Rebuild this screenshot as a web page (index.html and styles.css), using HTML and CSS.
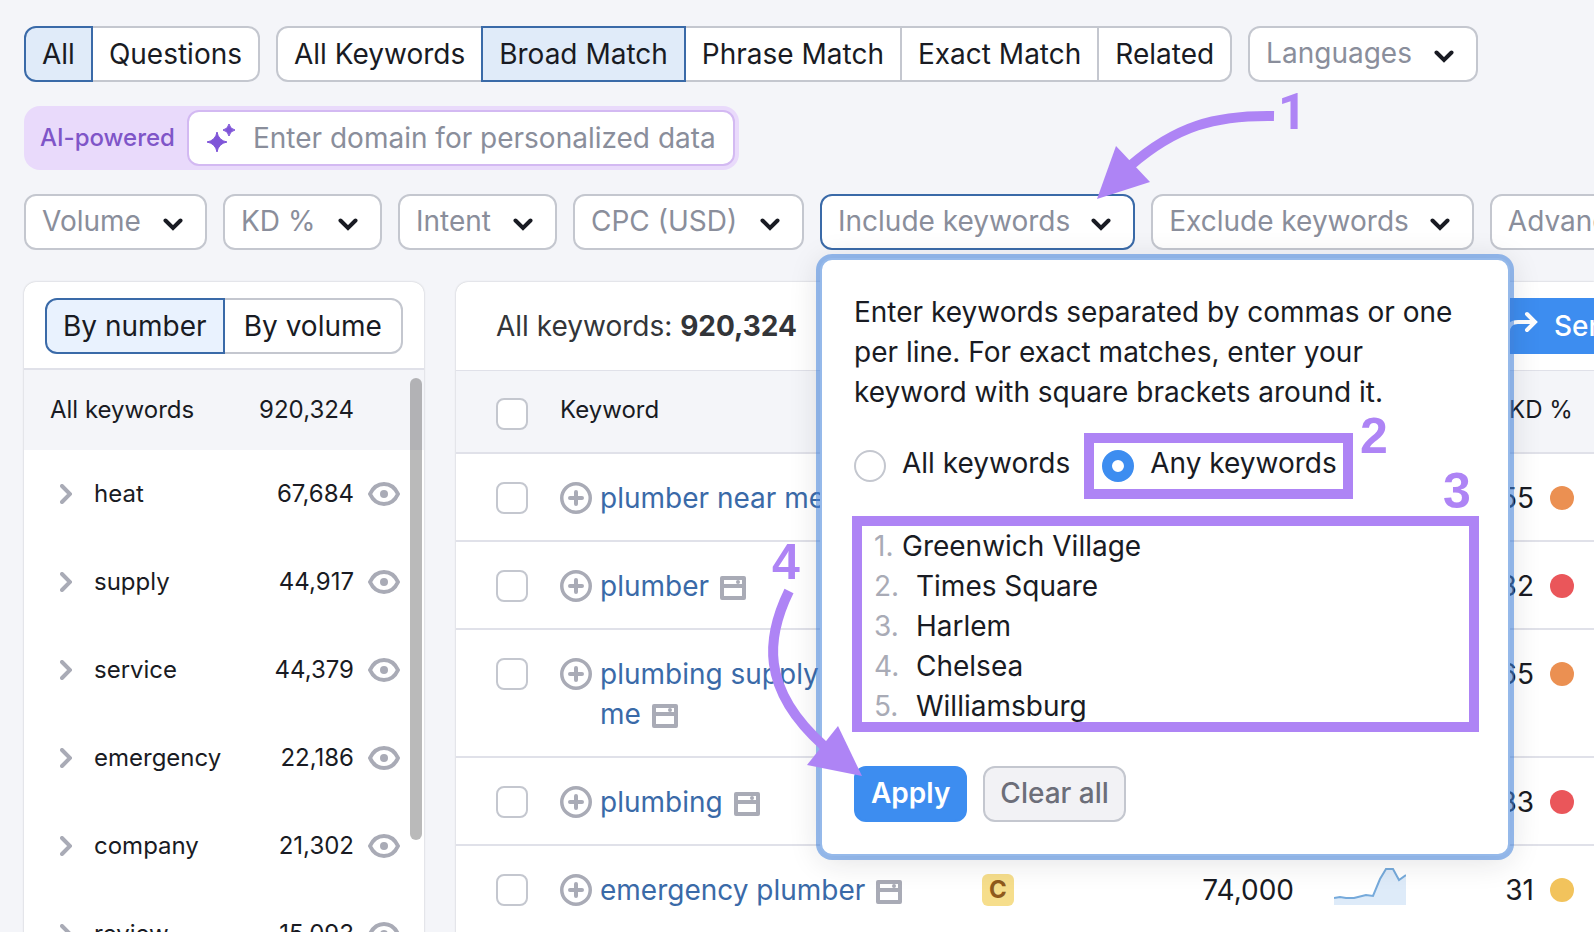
FILE: index.html
```html
<!DOCTYPE html>
<html lang="en">

<head>
    <meta charset="utf-8">
    <title>Keyword Magic Tool</title>
    <link rel="stylesheet" href="styles.css">
</head>

<body>
    <!-- shared icons -->
    <svg class="sprite" aria-hidden="true">
        <symbol id="chevron-down" viewBox="0 0 20 13">
            <path d="M2.5 2.5 L10 10 L17.5 2.5" fill="none" stroke="currentColor" stroke-width="4" stroke-linecap="round" stroke-linejoin="miter" />
        </symbol>
        <symbol id="chevron-right" viewBox="0 0 12 20">
            <path d="M2 2 L10 10 L2 18" fill="none" stroke="currentColor" stroke-width="4" stroke-linecap="round" />
        </symbol>
        <symbol id="eye" viewBox="0 0 32 24">
            <path d="M2 12 C5 5.500 10 2 16 2 S27 5.500 30 12 C27 18.500 22 22 16 22 S5 18.500 2 12 Z" fill="none" stroke="currentColor" stroke-width="4" stroke-linejoin="round" />
            <circle cx="16" cy="12" r="4" fill="currentColor" />
        </symbol>
        <symbol id="plus" viewBox="0 0 32 32">
            <circle cx="16" cy="16" r="14.250" fill="none" stroke="currentColor" stroke-width="3.500" />
            <path d="M16 10 V22 M10 16 H22" stroke="currentColor" stroke-width="4" stroke-linecap="round" />
        </symbol>
        <symbol id="serp" viewBox="0 0 26 24">
            <path fill="currentColor" fill-rule="evenodd" d="M2 0 H24 Q26 0 26 2 V22 Q26 24 24 24 H2 Q0 24 0 22 V2 Q0 0 2 0 Z M4 4 V8 H22 V4 Z M4 12 V20 H22 V12 Z" />
            <circle cx="18" cy="6" r="2" fill="currentColor" />
        </symbol>
    </svg>

    <div class="toolbar">
        <div class="segment">
            <button type="button" class="active">All</button>
            <button type="button">Questions</button>
        </div>
        <div class="segment">
            <button type="button">All Keywords</button>
            <button type="button" class="active">Broad Match</button>
            <button type="button">Phrase Match</button>
            <button type="button">Exact Match</button>
            <button type="button">Related</button>
        </div>
        <div class="select">
            <select aria-label="Languages"><option>Languages</option></select>
            <svg class="chevron"><use href="#chevron-down" /></svg>
        </div>
    </div>

    <div class="ai-bar">
        <label for="domain">AI-powered</label>
        <div class="ai-field">
            <svg class="sparkle" viewBox="0 0 28 28">
                <path d="M10 8 Q11.500 16.500 20 18 Q11.500 19.500 10 28 Q8.500 19.500 0 18 Q8.500 16.500 10 8 Z M22 0 Q23 5 28 6 Q23 7 22 12 Q21 7 16 6 Q21 5 22 0 Z" fill="#7f55d8" stroke="#7f55d8" stroke-linejoin="round" />
            </svg>
            <input type="text" id="domain" name="domain" placeholder="Enter domain for personalized data">
        </div>
    </div>

    <div class="toolbar filters">
        <div class="select">
            <select aria-label="Volume"><option>Volume</option></select>
            <svg class="chevron"><use href="#chevron-down" /></svg>
        </div>
        <div class="select">
            <select aria-label="KD %"><option>KD %</option></select>
            <svg class="chevron"><use href="#chevron-down" /></svg>
        </div>
        <div class="select">
            <select aria-label="Intent"><option>Intent</option></select>
            <svg class="chevron"><use href="#chevron-down" /></svg>
        </div>
        <div class="select">
            <select aria-label="CPC (USD)"><option>CPC (USD)</option></select>
            <svg class="chevron"><use href="#chevron-down" /></svg>
        </div>
        <div class="select">
            <button type="button" class="open" aria-expanded="true">Include keywords</button>
            <svg class="chevron"><use href="#chevron-down" /></svg>

            <form class="popup">
                <p>Enter keywords separated by commas or one per line. For exact matches, enter your keyword with square brackets around it.</p>
                <div class="radios">
                    <label><input type="radio" name="match">All keywords</label>
                    <label class="marked"><input type="radio" name="match" checked>Any keywords</label>
                </div>
                <div class="editor">
                    <ol class="gutter" aria-hidden="true">
                        <li>1.</li>
                        <li>2.</li>
                        <li>3.</li>
                        <li>4.</li>
                        <li>5.</li>
                    </ol>
                    <textarea rows="5" aria-label="Keywords" spellcheck="false">Greenwich Village
&ensp;Times Square
&ensp;Harlem
&ensp;Chelsea
&ensp;Williamsburg</textarea>
                </div>
                <div class="actions">
                    <button type="button" class="btn primary">Apply</button>
                    <button type="button" class="btn">Clear all</button>
                </div>
            </form>
        </div>
        <div class="select">
            <button type="button" aria-expanded="false">Exclude keywords</button>
            <svg class="chevron"><use href="#chevron-down" /></svg>
        </div>
        <div class="select">
            <button type="button" aria-expanded="false">Advanced filters</button>
            <svg class="chevron"><use href="#chevron-down" /></svg>
        </div>
    </div>

    <div class="content">
        <aside class="card groups">
            <div class="groups-head">
                <div class="segment">
                    <button type="button" class="active">By number</button>
                    <button type="button">By volume</button>
                </div>
            </div>
            <div class="groups-total"><span>All keywords</span><span>920,324</span></div>
            <ul class="group-list">
                <li><svg class="arrow"><use href="#chevron-right" /></svg><span>heat</span><span class="count">67,684</span><svg class="eye"><use href="#eye" /></svg></li>
                <li><svg class="arrow"><use href="#chevron-right" /></svg><span>supply</span><span class="count">44,917</span><svg class="eye"><use href="#eye" /></svg></li>
                <li><svg class="arrow"><use href="#chevron-right" /></svg><span>service</span><span class="count">44,379</span><svg class="eye"><use href="#eye" /></svg></li>
                <li><svg class="arrow"><use href="#chevron-right" /></svg><span>emergency</span><span class="count">22,186</span><svg class="eye"><use href="#eye" /></svg></li>
                <li><svg class="arrow"><use href="#chevron-right" /></svg><span>company</span><span class="count">21,302</span><svg class="eye"><use href="#eye" /></svg></li>
                <li><svg class="arrow"><use href="#chevron-right" /></svg><span>review</span><span class="count">15,093</span><svg class="eye"><use href="#eye" /></svg></li>
            </ul>
            <div class="scrollbar"></div>
        </aside>

        <main class="card results">
            <div class="results-head">
                <div>All keywords: <b>920,324</b></div>
                <button type="button" class="send">
                    <svg viewBox="0 0 32 32">
                        <path d="M2 28 V22 Q2 12 12 12 H28 M21 4 L29 12 L21 20" fill="none" stroke="currentColor" stroke-width="4" stroke-linecap="round" />
                    </svg>
                    Send keywords
                </button>
            </div>
            <table>
                <colgroup>
                    <col class="c-check">
                    <col class="c-keyword">
                    <col class="c-intent">
                    <col class="c-volume">
                    <col class="c-trend">
                    <col class="c-kd">
                </colgroup>
                <thead>
                    <tr>
                        <th><input type="checkbox" aria-label="Select all"></th>
                        <th>Keyword</th>
                        <th></th>
                        <th></th>
                        <th></th>
                        <th class="kd-head">KD %</th>
                    </tr>
                </thead>
                <tbody>
                    <tr>
                        <td><input type="checkbox" aria-label="plumber near me"></td>
                        <td><div class="kw"><svg class="plus"><use href="#plus" /></svg><div><a href="#">plumber near me</a></div></div></td>
                        <td></td>
                        <td></td>
                        <td></td>
                        <td><div class="kd">55<i class="dot orange"></i></div></td>
                    </tr>
                    <tr>
                        <td><input type="checkbox" aria-label="plumber"></td>
                        <td><div class="kw"><svg class="plus"><use href="#plus" /></svg><div><a href="#">plumber</a><svg class="serp"><use href="#serp" /></svg></div></div></td>
                        <td></td>
                        <td></td>
                        <td></td>
                        <td><div class="kd">82<i class="dot red"></i></div></td>
                    </tr>
                    <tr>
                        <td><input type="checkbox" aria-label="plumbing supply near me"></td>
                        <td><div class="kw"><svg class="plus"><use href="#plus" /></svg><div><a href="#">plumbing supply near me</a><svg class="serp"><use href="#serp" /></svg></div></div></td>
                        <td></td>
                        <td></td>
                        <td></td>
                        <td><div class="kd">65<i class="dot orange"></i></div></td>
                    </tr>
                    <tr>
                        <td><input type="checkbox" aria-label="plumbing"></td>
                        <td><div class="kw"><svg class="plus"><use href="#plus" /></svg><div><a href="#">plumbing</a><svg class="serp"><use href="#serp" /></svg></div></div></td>
                        <td></td>
                        <td></td>
                        <td></td>
                        <td><div class="kd">83<i class="dot red"></i></div></td>
                    </tr>
                    <tr>
                        <td><input type="checkbox" aria-label="emergency plumber"></td>
                        <td><div class="kw"><svg class="plus"><use href="#plus" /></svg><div><a href="#">emergency plumber</a><svg class="serp"><use href="#serp" /></svg></div></div></td>
                        <td><span class="intent">C</span></td>
                        <td class="num">74,000</td>
                        <td>
                            <svg class="trend" viewBox="0 0 72 38">
                                <path d="M0 31 L6 30 L12 31 H20 L32 28 L39 29 L46 12 L52 2 H59 L65 13 L72 8 V38 H0 Z" fill="#deebf9" />
                                <path d="M0 31 L6 30 L12 31 H20 L32 28 L39 29 L46 12 L52 2 H59 L65 13 L72 8" fill="none" stroke="#76aadb" stroke-width="2" />
                            </svg>
                        </td>
                        <td><div class="kd">31<i class="dot yellow"></i></div></td>
                    </tr>
                </tbody>
            </table>
        </main>
    </div>

    <!-- walkthrough steps, drawn above the page -->
    <div class="steps">
        <svg class="step-arrows" width="1594" height="932">
            <path d="M1274 116 C1215 115 1176 126 1130 166" />
            <polygon points="1097,199 1116,146 1150,182" />
            <path d="M789 591 C767 636 759 688 824 746" />
            <polygon points="862,776 838,726 807,765" />
        </svg>
        <span class="step one">1</span>
        <span class="step two">2</span>
        <span class="step three">3</span>
        <span class="step four">4</span>
    </div>
</body>

</html>
```
FILE: styles.css
```css
* {
    box-sizing: border-box;
}

body {
    font-family: Inter, "Liberation Sans", sans-serif;
    font-size: 28px;
    line-height: 40px;
    color: #191b23;
    background-color: #f4f5f9;
    margin: 0;
    padding: 26px 0 0 24px;
    height: 100vh;
    overflow: hidden;
    position: relative;
}

button, input, select, textarea {
    font: inherit;
    color: inherit;
    margin: 0;
}

button {
    cursor: pointer;
    white-space: nowrap;
}

.sprite {
    display: none;
}

/* top rows */

.toolbar {
    display: flex;
    gap: 16px;
}

.segment {
    display: flex;
}

.segment button {
    height: 56px;
    padding: 0 16px;
    background: #fff;
    border: 2px solid #c4c7cf;
    margin-left: -2px;
}

.segment button:first-child {
    margin-left: 0;
    border-radius: 12px 0 0 12px;
}

.segment button:last-child {
    border-radius: 0 12px 12px 0;
}

.segment .active {
    position: relative;
    background: #e0ebf9;
    border-color: #3a6aa8;
}

.select {
    position: relative;
    flex: none;
}

.select > select,
.select > button {
    appearance: none;
    display: block;
    height: 56px;
    padding: 0 64px 2px 16px;
    background: #fff;
    border: 2px solid #c4c7cf;
    border-radius: 12px;
    color: #8a8e9b;
}

.select > button {
    padding-right: 63px;
}

.select > .open {
    border-color: #3a6aa8;
}

.chevron {
    position: absolute;
    top: 24px;
    right: 24px;
    width: 20px;
    height: 13px;
    pointer-events: none;
}

.ai-bar {
    display: flex;
    align-items: center;
    width: fit-content;
    margin: 24px 0;
    padding: 4px;
    border-radius: 16px;
    background: #e9dafb;
}

.ai-bar label {
    padding: 0 12px;
    font-size: 24px;
    font-weight: 500;
    color: #7f55c8;
}

.ai-field {
    display: flex;
    align-items: center;
    gap: 18px;
    height: 56px;
    padding: 0 16px 0 18px;
    background: #fff;
    border: 2px solid #d3b9f2;
    border-radius: 12px;
}

.sparkle {
    width: 28px;
    height: 28px;
}

#domain {
    width: 464px;
    padding: 0;
    border: 0;
    outline: 0;
    background: none;
}

#domain::placeholder {
    color: #8a8e9b;
    opacity: 1;
}

/* include keywords popup */

.popup {
    position: absolute;
    z-index: 2;
    top: calc(100% + 8px);
    left: 0;
    width: 690px;
    display: flex;
    flex-direction: column;
    gap: 32px;
    padding: 32px;
    background: #fff;
    border: 2px solid #95b9ea;
    border-radius: 12px;
    box-shadow: 0 0 0 4px rgba(66, 132, 222, 0.55), 0 4px 32px rgba(25, 27, 35, 0.14);
}

.popup p {
    margin: 0;
}

.radios {
    display: flex;
    gap: 32px;
    height: 40px;
    line-height: 38px;
}

.radios label {
    position: relative;
    display: flex;
    gap: 16px;
}

.radios input {
    appearance: none;
    width: 32px;
    height: 32px;
    margin-top: 6px;
    border: 2px solid #c4c7cf;
    border-radius: 50%;
}

.radios input:checked {
    border: 10px solid #3d8df0;
}

/* purple frames around the highlighted fields */
.marked::after,
.editor::after {
    content: "";
    position: absolute;
    border: 10px solid #ae84f5;
    pointer-events: none;
}

.marked::after {
    inset: -11px -16px -15px -18px;
}

.editor::after {
    inset: 0 -3px 2px -2px;
}

.editor {
    position: relative;
    display: flex;
    padding: 10px 0 8px 20px;
}

.gutter {
    list-style: none;
    width: 28px;
    margin: 0;
    padding: 0;
    color: #a9abb6;
}

.editor textarea {
    flex: 1;
    height: 200px;
    padding: 0;
    border: 0;
    outline: 0;
    resize: none;
    overflow: hidden;
    background: none;
}

.actions {
    display: flex;
    gap: 16px;
}

.btn {
    height: 56px;
    padding: 0 15px 2px;
    font-weight: 500;
    color: #6c6e79;
    background: #f2f2f5;
    border: 2px solid #c4c7cf;
    border-radius: 12px;
}

.primary {
    font-weight: 600;
    color: #fff;
    background: #3d8df0;
    border-color: #3d8df0;
}

/* panels */

.content {
    display: flex;
    gap: 32px;
    margin-top: 32px;
}

.card {
    background: #fff;
    box-shadow: 0 0 2px rgba(25, 27, 35, 0.25);
}

.groups {
    position: relative;
    flex: none;
    width: 400px;
    border-radius: 12px 12px 0 0;
    font-size: 24px;
}

.groups-head {
    padding: 16px 21px 14px;
    border-bottom: 2px solid #e0e1e9;
    font-size: 28px;
}

.groups-head .segment button:last-child {
    flex: auto;
}

.groups-head .segment .active {
    background: #e9f2fe;
}

.groups-total {
    display: flex;
    justify-content: space-between;
    padding: 20px 70px 20px 26px;
    background: #f4f5f9;
}

.group-list {
    list-style: none;
    margin: 0;
    padding: 0;
}

.group-list li {
    display: flex;
    align-items: center;
    height: 88px;
    padding: 0 24px 0 36px;
}

.arrow {
    width: 12px;
    height: 20px;
    margin-right: 22px;
    color: #a9abb6;
}

.count {
    margin-left: auto;
}

.eye {
    width: 32px;
    height: 24px;
    margin-left: 14px;
    color: #a9abb6;
}

.scrollbar {
    position: absolute;
    top: 96px;
    right: 2px;
    width: 12px;
    height: 462px;
    border-radius: 6px;
    background: rgba(0, 0, 0, 0.27);
}

.results {
    flex: 1;
    min-width: 0;
    border-radius: 12px 0 0 0;
}

.results-head {
    display: flex;
    justify-content: space-between;
    align-items: center;
    height: 89px;
    padding-left: 40px;
    border-bottom: 1px solid #e0e1e9;
    color: #333539;
}

.send {
    display: flex;
    align-items: center;
    gap: 16px;
    width: 104px;
    height: 56px;
    padding: 0 0 0 16px;
    border: 0;
    border-radius: 12px 0 0 12px;
    overflow: hidden;
    font-weight: 500;
    color: #fff;
    background: #3d8df0;
}

.send svg {
    flex: none;
    width: 32px;
    height: 32px;
}

table {
    table-layout: fixed;
    width: 100%;
    border-spacing: 0;
}

.c-check {
    width: 104px;
}

.c-intent {
    width: 142px;
}

.c-volume {
    width: 186px;
}

.c-trend {
    width: 177px;
}

.c-kd {
    width: 123px;
}

th {
    height: 83px;
    padding: 0 0 4px;
    border-bottom: 2px solid #e0e1e9;
    background: #f4f5f9;
    font-size: 24px;
    font-weight: 400;
    text-align: left;
}

td {
    padding: 24px 0 22px;
    border-bottom: 2px solid #e0e1e9;
    vertical-align: top;
}

td:first-child,
th:first-child {
    padding-left: 40px;
}

th:first-child {
    padding-bottom: 0;
}

.num {
    text-align: right;
}

.kd-head {
    padding-left: 38px;
    white-space: nowrap;
}

table input {
    appearance: none;
    display: block;
    width: 32px;
    height: 32px;
    margin-top: 4px;
    background: #fff;
    border: 2px solid #c4c7cf;
    border-radius: 8px;
}

.kw {
    display: flex;
    gap: 8px;
    padding-right: 40px;
}

.kw a {
    color: #3a6aa8;
    text-decoration: none;
}

.plus {
    flex: none;
    width: 32px;
    height: 32px;
    margin-top: 4px;
    color: #a9abb6;
}

.serp {
    width: 26px;
    height: 24px;
    margin-left: 11px;
    vertical-align: -4px;
    color: #a9abb6;
}

.intent {
    display: block;
    width: 32px;
    height: 32px;
    margin: 4px 0 0 16px;
    border-radius: 6px;
    background: #f6de8c;
    color: #8f5a1c;
    font-size: 24px;
    font-weight: 700;
    line-height: 32px;
    text-align: center;
}

.trend {
    display: block;
    width: 72px;
    height: 38px;
    margin: -3px 0 0 40px;
}

.kd {
    display: flex;
    justify-content: flex-end;
    align-items: center;
    gap: 16px;
    padding-right: 20px;
}

.dot {
    width: 24px;
    height: 24px;
    border-radius: 50%;
}

.orange {
    background: #eb9052;
}

.red {
    background: #ea565a;
}

.yellow {
    background: #f2c35c;
}

/* numbered steps with arrows */

.steps {
    position: absolute;
    z-index: 3;
    top: 0;
    left: 0;
    color: #ae84f5;
    pointer-events: none;
}

.step-arrows {
    display: block;
    fill: currentColor;
}

.step-arrows path {
    fill: none;
    stroke: currentColor;
    stroke-width: 10;
}

.step {
    position: absolute;
    font-family: "Liberation Sans", Arial, sans-serif;
    font-size: 50px;
    font-weight: 700;
    line-height: 50px;
}

/* footless figure */
.one {
    left: 1278px;
    top: 87px;
    font-family: Roboto, sans-serif;
}

.two {
    left: 1360px;
    top: 411px;
}

.three {
    left: 1443px;
    top: 466px;
}

.four {
    left: 772px;
    top: 537px;
}
```
